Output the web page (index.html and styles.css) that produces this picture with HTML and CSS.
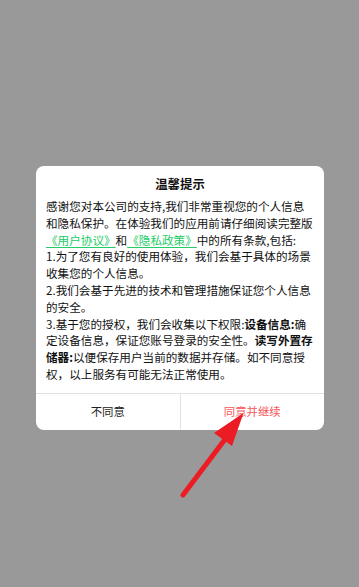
FILE: index.html
```
<!DOCTYPE html>
<html lang="zh-CN">
<head>
<meta charset="utf-8">
<link rel="stylesheet" href="styles.css">
</head>
<body>
<div class="screen">
  <div class="dialog">
    <div class="title">温馨提示</div>
    <div class="body">感谢您对本公司的支持,我们非常重视您的个人信息和隐私保护。在体验我们的应用前请仔细阅读完整版<span class="link">《用户协议》</span>和<span class="link">《隐私政策》</span>中的所有条款,包括:<br>1.为了您有良好的使用体验，我们会基于具体的场景收集您的个人信息。<br>2.我们会基于先进的技术和管理措施保证您个人信息的安全。<br>3.基于您的授权，我们会收集以下权限:<b>设备信息:</b>确定设备信息，保证您账号登录的安全性。<b>读写外置存储器:</b>以便保存用户当前的数据并存储。如不同意授权，以上服务有可能无法正常使用。</div>
    <div class="actions">
      <div class="btn">不同意</div>
      <div class="btn primary">同意并继续</div>
    </div>
  </div>
  <svg class="arrow" width="359" height="587" viewBox="0 0 359 587">
    <line x1="183" y1="495" x2="226" y2="438" stroke="#ec1c24" stroke-width="5" stroke-linecap="round"/>
    <polygon points="243.5,413 214,433 232,446" fill="#ec1c24"/>
  </svg>
</div>
</body>
</html>
```
FILE: styles.css
```
html, body {
  margin: 0;
  padding: 0;
}
body {
  background: #999999;
  font-family: "Noto Sans CJK SC", "Noto Sans", sans-serif;
}
.screen {
  position: relative;
  width: 359px;
  height: 587px;
  padding-top: 166px;
  box-sizing: border-box;
}
.dialog {
  margin-left: 36px;
  width: 288px;
  background: #ffffff;
  border-radius: 8px;
  overflow: hidden;
}
.title {
  text-align: center;
  font-size: 12.4px;
  font-weight: bold;
  color: #111;
  line-height: 17px;
  padding-top: 10px;
}
.body {
  margin-top: 5px;
  padding: 0 10px 10px 10px;
  font-size: 11.6px;
  line-height: 16.8px;
  color: #111;
}
.body b {
  font-weight: bold;
}
.link {
  color: #22cc66;
  text-decoration: underline;
  text-decoration-color: #22cc66;
  text-underline-offset: 2px;
}
.actions {
  display: flex;
  border-top: 1px solid #e2e2e2;
  height: 36px;
}
.btn {
  flex: 1;
  display: flex;
  align-items: center;
  justify-content: center;
  font-size: 11.4px;
  color: #222;
  padding-bottom: 1px;
}
.btn + .btn {
  border-left: 1px solid #e2e2e2;
}
.btn.primary {
  color: #f5575a;
}
.arrow {
  position: absolute;
  left: 0;
  top: 0;
}
```
